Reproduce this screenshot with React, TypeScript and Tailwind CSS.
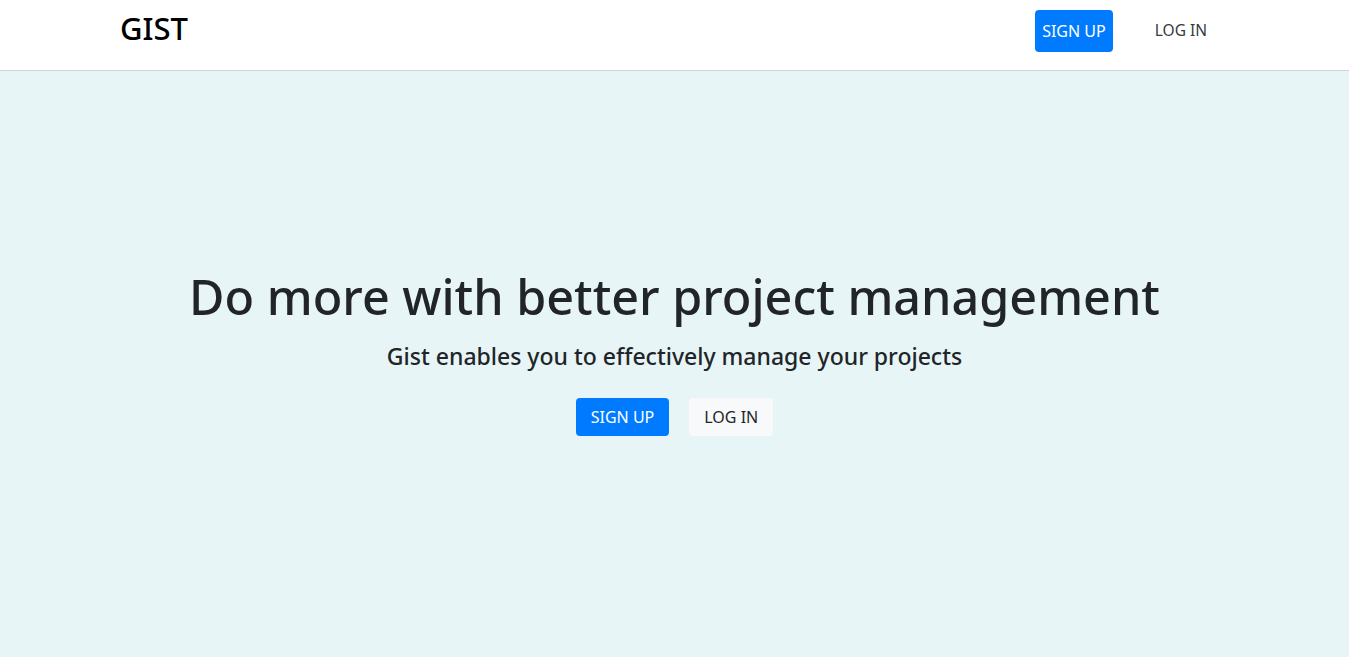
export default function App() {
  return (
    <div className="min-h-screen flex flex-col bg-[#e8f5f6] font-['Noto_Sans',sans-serif] text-[#212529]">
      <header className="h-[71px] bg-white border-b border-[#cfd4d6] flex items-center justify-between pb-[8px] pl-[120px] pr-[142px]">
        <a className="text-[31px] font-medium text-black leading-none -mt-[6px]">GIST</a>
        <nav className="flex items-center gap-[42px]">
          <button className="h-[42px] px-[7px] rounded-[4px] bg-[#007bff] text-white text-[16px]">SIGN UP</button>
          <a className="text-[15.5px] text-[#343a40]">LOG IN</a>
        </nav>
      </header>
      <main className="flex-1 flex flex-col items-center pt-[196px]">
        <h1 className="text-[48.5px] font-medium leading-[1.2]">Do more with better project management</h1>
        <h2 className="mt-[18px] text-[23px] font-medium leading-[1.2]">Gist enables you to effectively manage your projects</h2>
        <div className="mt-[27px] flex gap-[20px]">
          <button className="h-[38px] px-[15px] rounded-[4px] bg-[#007bff] text-white text-[16px]">SIGN UP</button>
          <button className="h-[38px] px-[15px] rounded-[4px] bg-[#f8f9fa] text-[#212529] text-[16px]">LOG IN</button>
        </div>
      </main>
    </div>
  );
}
